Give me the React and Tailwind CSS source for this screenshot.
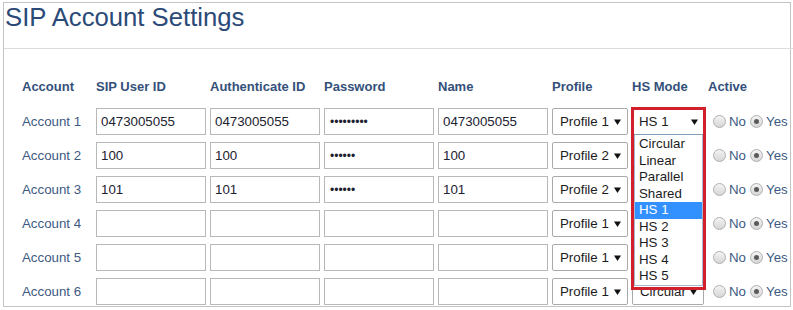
import React from 'react';

const rows = [
  { n: 1, user: '0473005055', auth: '0473005055', pass: 9, name: '0473005055', profile: 'Profile 1', hs: 'HS 1' },
  { n: 2, user: '100', auth: '100', pass: 6, name: '100', profile: 'Profile 2', hs: '' },
  { n: 3, user: '101', auth: '101', pass: 6, name: '101', profile: 'Profile 2', hs: '' },
  { n: 4, user: '', auth: '', pass: 0, name: '', profile: 'Profile 1', hs: '' },
  { n: 5, user: '', auth: '', pass: 0, name: '', profile: 'Profile 1', hs: '' },
  { n: 6, user: '', auth: '', pass: 0, name: '', profile: 'Profile 1', hs: 'Circular' },
];

const hsOptions = ['Circular', 'Linear', 'Parallel', 'Shared', 'HS 1', 'HS 2', 'HS 3', 'HS 4', 'HS 5'];

function Field({ value, small }) {
  return (
    <input
      type="text"
      readOnly
      value={value}
      className={`w-[110px] h-[27px] border border-[#b8b8b8] bg-white px-[4px] text-[#1c2230] outline-none ${small ? 'text-[12px] pl-[5px]' : 'text-[13.3px]'}`}
    />
  );
}

function Arrow() {
  return (
    <svg width="7" height="6" viewBox="0 0 7 6" className="shrink-0">
      <polygon points="0,0.5 7,0.5 3.5,6" fill="#111" />
    </svg>
  );
}

function FakeSelect({ label, width }) {
  return (
    <div
      className={`${width} h-[27px] flex items-center justify-between border border-[#aaaaaa] rounded-[2px] bg-white pl-[7px] pr-[6px] text-[13.3px] text-[#1c1c1c]`}
    >
      <span>{label}</span>
      <Arrow />
    </div>
  );
}

function Radio({ checked }) {
  return (
    <span className="w-[13px] h-[13px] rounded-full border border-[#b0b0b0] bg-gradient-to-b from-[#f4f4f4] to-[#d6d6d6] flex items-center justify-center">
      {checked && <span className="w-[5px] h-[5px] rounded-full bg-[#5a5a5a]" />}
    </span>
  );
}

function HsDropdown() {
  return (
    <div className="absolute left-[-1px] top-[-1px] w-[75px] h-[183px] border-[3px] border-[#d21f2c] z-10 bg-white flex flex-col">
      <div className="h-[25px] flex items-center justify-between border-b border-[#7f9db9] pl-[5px] pr-[5px] text-[13.3px] text-[#1c1c1c]">
        <span>HS 1</span>
        <Arrow />
      </div>
      <ul className="flex flex-col border-x border-b border-[#a8b8cc] pt-[1px]">
        {hsOptions.map((o) => (
          <li
            key={o}
            className={`h-[16.5px] leading-[16.5px] pl-[4px] text-[13.3px] ${o === 'HS 1' ? 'bg-[#3390ff] text-white' : 'text-[#1c1c1c]'}`}
          >
            {o}
          </li>
        ))}
      </ul>
    </div>
  );
}

export default function App() {
  return (
    <div className="w-[793px] h-[310px] bg-white pt-[2px] font-['Liberation_Sans',Arial,sans-serif]">
      <div className="ml-[3px] w-[788px] h-[305px] border border-[#c4c4c4] flex flex-col">
        <div className="h-[46px] shrink-0 border-b border-[#dcdcdc] -mr-[3px] pl-[1px] pt-[2px]">
          <h1 className="text-[25.7px] leading-[24px] text-[#2b4a78]">SIP Account Settings</h1>
        </div>

        <div className="pl-[18px] pt-[30px] flex flex-col">
          <div className="flex gap-[4px] h-[16px] items-center text-[13px] font-bold text-[#34507a]">
            <div className="w-[70px]">Account</div>
            <div className="w-[110px]">SIP User ID</div>
            <div className="w-[110px]">Authenticate ID</div>
            <div className="w-[110px]">Password</div>
            <div className="w-[110px]">Name</div>
            <div className="w-[76px]">Profile</div>
            <div className="w-[72px]">HS Mode</div>
            <div>Active</div>
          </div>

          <div className="mt-[13px] flex flex-col gap-[7px]">
            {rows.map((r) => (
              <div key={r.n} className="flex items-center gap-[4px] h-[27px]">
                <div className="w-[70px] text-[13.3px] text-[#3d5a82]">Account {r.n}</div>
                <Field value={r.user} />
                <Field value={r.auth} />
                <Field value={'•'.repeat(r.pass)} small />
                <Field value={r.name} />
                <FakeSelect label={r.profile} width="w-[76px]" />
                <div className="relative w-[72px]">
                  <FakeSelect label={r.hs} width="w-[72px]" />
                  {r.n === 1 && <HsDropdown />}
                </div>
                <div className="flex items-center pl-[5px] text-[13.3px] text-[#3d5a82]">
                  <Radio checked={false} />
                  <span className="ml-[3px] mr-[4px]">No</span>
                  <Radio checked />
                  <span className="ml-[3px]">Yes</span>
                </div>
              </div>
            ))}
          </div>
        </div>
      </div>
    </div>
  );
}
